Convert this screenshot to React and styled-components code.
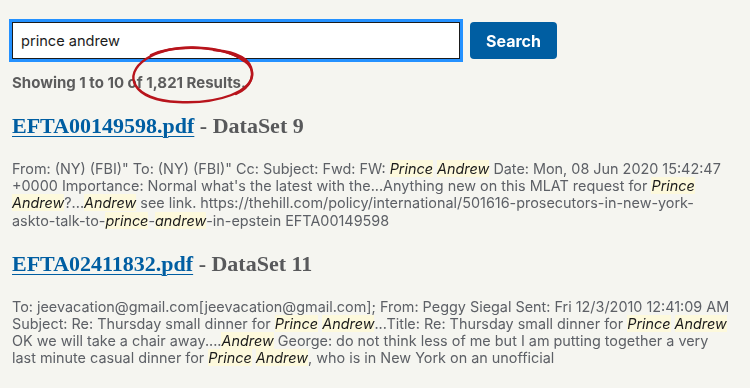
import React, { useEffect, useRef } from 'react'
import styled, { createGlobalStyle } from 'styled-components'

const GlobalStyle = createGlobalStyle`
  html, body {
    margin: 0;
    padding: 0;
    background: #f5f5f0;
  }
  body {
    font-family: Inter, "Liberation Sans", sans-serif;
    overflow: hidden;
  }
`

const results = [
  {
    file: 'EFTA00149598.pdf',
    dataset: 'DataSet 9',
    lines: [
      ['From: (NY) (FBI)" To: (NY) (FBI)" Cc: Subject: Fwd: FW: ', ['Prince'], ' ', ['Andrew'], ' Date: Mon, 08 Jun 2020 15:42:47'],
      ['+0000 Importance: Normal what\'s the latest with the...Anything new on this MLAT request for ', ['Prince']],
      [['Andrew'], '?...', ['Andrew'], ' see link. https://thehill.com/policy/international/501616-prosecutors-in-new-york-'],
      ['askto-talk-to-', ['prince'], '-', ['andrew'], '-in-epstein EFTA00149598'],
    ],
  },
  {
    file: 'EFTA02411832.pdf',
    dataset: 'DataSet 11',
    lines: [
      ['To: jeevacation@gmail.com[jeevacation@gmail.com]; From: Peggy Siegal Sent: Fri 12/3/2010 12:41:09 AM'],
      ['Subject: Re: Thursday small dinner for ', ['Prince'], ' ', ['Andrew'], '...Title: Re: Thursday small dinner for ', ['Prince'], ' ', ['Andrew']],
      ['OK we will take a chair away....', ['Andrew'], ' George: do not think less of me but I am putting together a very'],
      ['last minute casual dinner for ', ['Prince'], ' ', ['Andrew'], ', who is in New York on an unofficial'],
    ],
  },
]

function App() {
  const inputRef = useRef(null)

  useEffect(() => {
    const el = inputRef.current
    if (el) {
      el.focus()
      el.setSelectionRange(el.value.length, el.value.length)
    }
  }, [])

  return (
    <Page>
      <GlobalStyle />
      <SearchForm onSubmit={(e) => e.preventDefault()}>
        <SearchInput ref={inputRef} type="search" defaultValue="prince andrew" />
        <SearchButton type="submit">Search</SearchButton>
      </SearchForm>

      <Summary>Showing 1 to 10 of 1,821 Results.</Summary>

      <ResultList>
        {results.map((r) => (
          <Result key={r.file}>
            <ResultTitle>
              <FileLink href="#">{r.file}</FileLink> - {r.dataset}
            </ResultTitle>
            <Snippet>
              {r.lines.map((line, i) => (
                <React.Fragment key={i}>
                  {line.map((part, j) =>
                    Array.isArray(part) ? <Hit key={j}>{part[0]}</Hit> : <React.Fragment key={j}>{part}</React.Fragment>
                  )}
                  {i < r.lines.length - 1 && <br />}
                </React.Fragment>
              ))}
            </Snippet>
          </Result>
        ))}
      </ResultList>

      {/* hand-drawn marker ring around the result count */}
      <Scribble viewBox="0 0 750 388" aria-hidden="true">
        <path d="M244 61 C226 45, 172 42, 146 59 C122 75, 132 100, 178 102 C218 104, 254 92, 252 72 C251 60, 238 52, 214 50" />
        <path d="M151 55 C177 44, 226 45, 247 63 C258 74, 250 88, 236 94" />
      </Scribble>
    </Page>
  )
}

export default App

const Page = styled.div`
  position: relative;
  width: 750px;
  height: 388px;
  padding: 22px 12px 0 12px;
  box-sizing: border-box;
  overflow: hidden;
`

const SearchForm = styled.form`
  display: flex;
  align-items: center;
  gap: 10px;
  margin: 0;
`

const SearchInput = styled.input`
  box-sizing: border-box;
  width: 448px;
  height: 37px;
  margin: 0;
  padding: 0 8px;
  border: 1px solid #1b1b1b;
  border-radius: 0;
  outline: 3px solid #2491ff;
  outline-offset: 0;
  background: #fff;
  font-family: Inter, "Liberation Sans", sans-serif;
  font-size: 14.6px;
  color: #1b1b1b;
  caret-color: #1b1b1b;
  appearance: none;

  &::-webkit-search-cancel-button {
    display: none;
  }
`

const SearchButton = styled.button`
  width: 87px;
  height: 37px;
  border: none;
  border-radius: 4px;
  background: #005ea2;
  color: #fff;
  font-family: Inter, "Liberation Sans", sans-serif;
  font-weight: 700;
  font-size: 16px;
  cursor: pointer;
`

const Summary = styled.p`
  margin: 14px 0 0;
  font-size: 15px;
  line-height: 20px;
  font-weight: 700;
  color: #5c5c5c;
`

const ResultList = styled.div`
  display: flex;
  flex-direction: column;
  gap: 21px;
  margin-top: 19px;
`

const Result = styled.div`
  display: flex;
  flex-direction: column;
  gap: 20px;
`

const ResultTitle = styled.h2`
  margin: 0;
  font-family: "Liberation Serif", "DejaVu Serif", serif;
  font-size: 22px;
  line-height: 28px;
  font-weight: 700;
  color: #58595b;
`

const FileLink = styled.a`
  color: #005ea2;
  text-decoration: underline;
  text-decoration-thickness: 1px;
  text-underline-offset: 3px;
`

const Snippet = styled.p`
  margin: 0;
  font-size: 14.4px;
  line-height: 17.2px;
  color: #5d6066;
  white-space: nowrap;
`

const Hit = styled.em`
  font-style: italic;
  color: #1b1b1b;
  background: #fdf9dc;
`

const Scribble = styled.svg`
  position: absolute;
  top: 0;
  left: 0;
  width: 750px;
  height: 388px;
  pointer-events: none;
  fill: none;
  stroke: #b8141c;
  stroke-width: 2.4;
  stroke-linecap: round;
`
